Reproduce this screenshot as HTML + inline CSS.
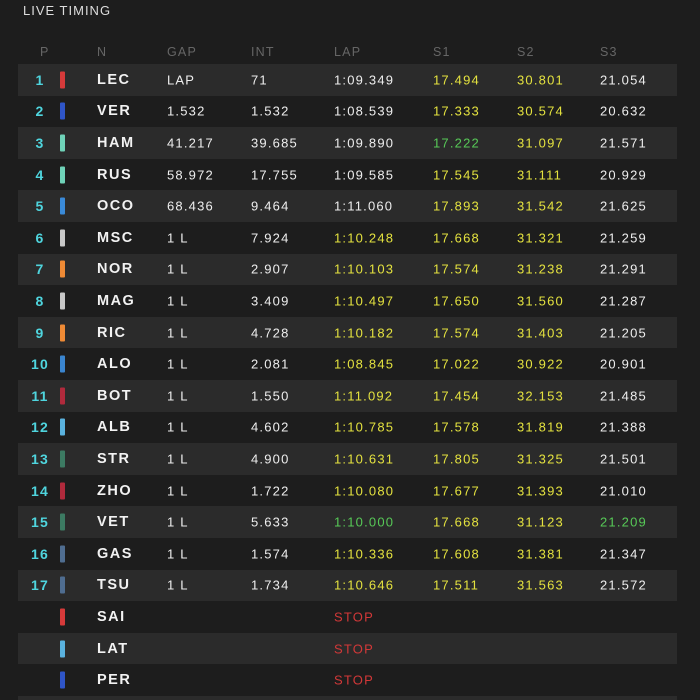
<!DOCTYPE html>
<html style="width:700px;height:700px;overflow:hidden"><head><meta charset="utf-8"><style>
html,body{margin:0;width:700px;height:700px;overflow:hidden;background:#1d1d1d}
body{position:relative;font-family:"Liberation Sans","DejaVu Sans",sans-serif;color:#eee}
.t{position:absolute;left:23px;top:3px;font-size:13px;letter-spacing:1px;color:#ddd}
.h,.r{position:absolute;left:18px;width:659px;height:31.6px}
.r.o{background:#2b2b2b}
.h{top:36px;color:#666;font-size:12.5px;letter-spacing:1.2px}
.h span,.r span{position:absolute;top:50%;transform:translateY(-50%);white-space:nowrap}
.r span{font-size:13px;letter-spacing:1.2px}
.p{color:#4fd5de;font-weight:bold;font-size:14px!important;width:40px;text-align:center;left:2px}
.b{left:42px;width:5px;height:17px;border-radius:1px}
.n{left:79px;font-weight:bold;font-size:14.5px!important;letter-spacing:1.5px!important;color:#f2f2f2}
.g{left:149px}.i{left:233px}.l{left:316px}.s1{left:415px}.s2{left:499px}.s3{left:582px}
.y{color:#e4e23f}.gr{color:#57c957}.st{color:#d23838}
</style></head><body>
<div class="t">LIVE TIMING</div>
<div class="h"><span style="left:22px">P</span><span style="left:79px">N</span><span style="left:149px">GAP</span><span style="left:233px">INT</span><span style="left:316px">LAP</span><span style="left:415px">S1</span><span style="left:499px">S2</span><span style="left:582px">S3</span></div>

<div class="r o" style="top:64px"><span class="p">1</span><span class="b" style="background:#d63a3a"></span><span class="n">LEC</span><span class="g">LAP</span><span class="i">71</span><span class="l">1:09.349</span><span class="s1 y">17.494</span><span class="s2 y">30.801</span><span class="s3">21.054</span></div>
<div class="r" style="top:95.6px"><span class="p">2</span><span class="b" style="background:#2f55c8"></span><span class="n">VER</span><span class="g">1.532</span><span class="i">1.532</span><span class="l">1:08.539</span><span class="s1 y">17.333</span><span class="s2 y">30.574</span><span class="s3">20.632</span></div>
<div class="r o" style="top:127.2px"><span class="p">3</span><span class="b" style="background:#6fd2b8"></span><span class="n">HAM</span><span class="g">41.217</span><span class="i">39.685</span><span class="l">1:09.890</span><span class="s1 gr">17.222</span><span class="s2 y">31.097</span><span class="s3">21.571</span></div>
<div class="r" style="top:158.8px"><span class="p">4</span><span class="b" style="background:#6fd2b8"></span><span class="n">RUS</span><span class="g">58.972</span><span class="i">17.755</span><span class="l">1:09.585</span><span class="s1 y">17.545</span><span class="s2 y">31.111</span><span class="s3">20.929</span></div>
<div class="r o" style="top:190.4px"><span class="p">5</span><span class="b" style="background:#3a8ad8"></span><span class="n">OCO</span><span class="g">68.436</span><span class="i">9.464</span><span class="l">1:11.060</span><span class="s1 y">17.893</span><span class="s2 y">31.542</span><span class="s3">21.625</span></div>
<div class="r" style="top:222px"><span class="p">6</span><span class="b" style="background:#c8c8c8"></span><span class="n">MSC</span><span class="g">1 L</span><span class="i">7.924</span><span class="l y">1:10.248</span><span class="s1 y">17.668</span><span class="s2 y">31.321</span><span class="s3">21.259</span></div>
<div class="r o" style="top:253.6px"><span class="p">7</span><span class="b" style="background:#ee8a35"></span><span class="n">NOR</span><span class="g">1 L</span><span class="i">2.907</span><span class="l y">1:10.103</span><span class="s1 y">17.574</span><span class="s2 y">31.238</span><span class="s3">21.291</span></div>
<div class="r" style="top:285.2px"><span class="p">8</span><span class="b" style="background:#c8c8c8"></span><span class="n">MAG</span><span class="g">1 L</span><span class="i">3.409</span><span class="l y">1:10.497</span><span class="s1 y">17.650</span><span class="s2 y">31.560</span><span class="s3">21.287</span></div>
<div class="r o" style="top:316.8px"><span class="p">9</span><span class="b" style="background:#ee8a35"></span><span class="n">RIC</span><span class="g">1 L</span><span class="i">4.728</span><span class="l y">1:10.182</span><span class="s1 y">17.574</span><span class="s2 y">31.403</span><span class="s3">21.205</span></div>
<div class="r" style="top:348.4px"><span class="p">10</span><span class="b" style="background:#3a85cf"></span><span class="n">ALO</span><span class="g">1 L</span><span class="i">2.081</span><span class="l y">1:08.845</span><span class="s1 y">17.022</span><span class="s2 y">30.922</span><span class="s3">20.901</span></div>
<div class="r o" style="top:380px"><span class="p">11</span><span class="b" style="background:#b02a3c"></span><span class="n">BOT</span><span class="g">1 L</span><span class="i">1.550</span><span class="l y">1:11.092</span><span class="s1 y">17.454</span><span class="s2 y">32.153</span><span class="s3">21.485</span></div>
<div class="r" style="top:411.6px"><span class="p">12</span><span class="b" style="background:#5ab2de"></span><span class="n">ALB</span><span class="g">1 L</span><span class="i">4.602</span><span class="l y">1:10.785</span><span class="s1 y">17.578</span><span class="s2 y">31.819</span><span class="s3">21.388</span></div>
<div class="r o" style="top:443.2px"><span class="p">13</span><span class="b" style="background:#3c7a62"></span><span class="n">STR</span><span class="g">1 L</span><span class="i">4.900</span><span class="l y">1:10.631</span><span class="s1 y">17.805</span><span class="s2 y">31.325</span><span class="s3">21.501</span></div>
<div class="r" style="top:474.8px"><span class="p">14</span><span class="b" style="background:#b02a3c"></span><span class="n">ZHO</span><span class="g">1 L</span><span class="i">1.722</span><span class="l y">1:10.080</span><span class="s1 y">17.677</span><span class="s2 y">31.393</span><span class="s3">21.010</span></div>
<div class="r o" style="top:506.4px"><span class="p">15</span><span class="b" style="background:#3c7a62"></span><span class="n">VET</span><span class="g">1 L</span><span class="i">5.633</span><span class="l gr">1:10.000</span><span class="s1 y">17.668</span><span class="s2 y">31.123</span><span class="s3 gr">21.209</span></div>
<div class="r" style="top:538px"><span class="p">16</span><span class="b" style="background:#4f6d90"></span><span class="n">GAS</span><span class="g">1 L</span><span class="i">1.574</span><span class="l y">1:10.336</span><span class="s1 y">17.608</span><span class="s2 y">31.381</span><span class="s3">21.347</span></div>
<div class="r o" style="top:569.6px"><span class="p">17</span><span class="b" style="background:#4f6d90"></span><span class="n">TSU</span><span class="g">1 L</span><span class="i">1.734</span><span class="l y">1:10.646</span><span class="s1 y">17.511</span><span class="s2 y">31.563</span><span class="s3">21.572</span></div>
<div class="r" style="top:601.2px"><span class="b" style="background:#d63a3a"></span><span class="n">SAI</span><span class="l st">STOP</span></div>
<div class="r o" style="top:632.8px"><span class="b" style="background:#5ab2de"></span><span class="n">LAT</span><span class="l st">STOP</span></div>
<div class="r" style="top:664.4px"><span class="b" style="background:#2f55c8"></span><span class="n">PER</span><span class="l st">STOP</span></div>
<div class="r o" style="top:696px;height:4px;overflow:hidden"></div>
</body></html>
